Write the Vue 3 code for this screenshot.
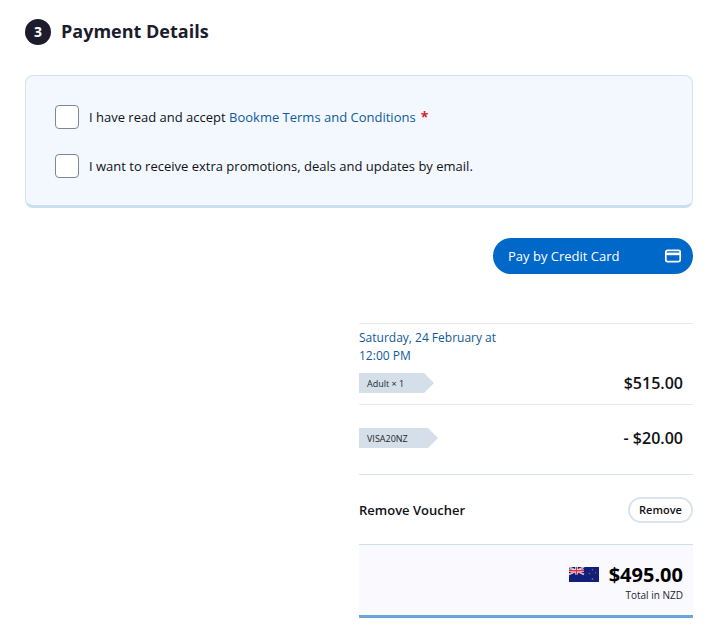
<script setup>
const consents = [
  { id: "terms", required: true },
  { id: "promo", required: false },
];
</script>

<template>
  <div class="page">
    <h2 class="heading">
      <span class="step">3</span>
      <span class="title">Payment Details</span>
    </h2>

    <div class="card">
      <label v-for="item in consents" :key="item.id" class="consent">
        <span class="box"></span>
        <span v-if="item.required">
          I have read and accept <a class="link">Bookme Terms and Conditions</a>
          <span class="star">*</span>
        </span>
        <span v-else>I want to receive extra promotions, deals and updates by email.</span>
      </label>
    </div>

    <div class="actions">
      <button class="pay">
        <span>Pay by Credit Card</span>
        <svg width="18" height="14" viewBox="0 0 18 14" fill="none">
          <rect x="1.8" y="1.4" width="14.4" height="11.2" rx="1.6" stroke="#fff" stroke-width="1.7" />
          <rect x="1.8" y="3.6" width="14.4" height="2.6" fill="#fff" />
        </svg>
      </button>
    </div>

    <div class="summary">
      <div class="row first">
        <div class="date">Saturday, 24 February at<br />12:00 PM</div>
        <div class="line">
          <span class="tag adult">Adult × 1</span>
          <span class="price">$515.00</span>
        </div>
      </div>
      <div class="row voucher">
        <div class="line">
          <span class="tag code">VISA20NZ</span>
          <span class="price">- $20.00</span>
        </div>
      </div>
      <div class="row remove">
        <span class="remove-label">Remove Voucher</span>
        <button class="remove-btn">Remove</button>
      </div>
      <div class="total">
        <div class="amount">
          <svg class="flag" width="30" height="15" viewBox="0 0 30 15">
            <rect width="30" height="15" fill="#0f1f7a" />
            <path d="M0 0L15 7.5M15 0L0 7.5" stroke="#fff" stroke-width="1.6" />
            <path d="M0 0L15 7.5M15 0L0 7.5" stroke="#d8324a" stroke-width="0.6" />
            <path d="M7.5 0V7.5M0 3.75H15" stroke="#fff" stroke-width="2.6" />
            <path d="M7.5 0V7.5M0 3.75H15" stroke="#d8324a" stroke-width="1.4" />
            <g fill="#b8475f">
              <circle cx="23.5" cy="2.8" r="0.8" />
              <circle cx="20.5" cy="6.5" r="0.8" />
              <circle cx="26.5" cy="5.8" r="0.7" />
              <circle cx="23.5" cy="12" r="0.9" />
            </g>
          </svg>
          <span>$495.00</span>
        </div>
        <div class="note">Total in NZD</div>
      </div>
    </div>
  </div>
</template>

<style>
body {
  background: #fff;
}
</style>

<style scoped>
.page {
  box-sizing: border-box;
  width: 712px;
  height: 638px;
  padding: 19px 19px 0 25px;
  overflow: hidden;
  font-family: "Open Sans", "Noto Sans", sans-serif;
  color: #111116;
}

.heading {
  display: flex;
  align-items: center;
  gap: 10px;
  height: 26px;
  margin: 0;
  font-size: 18px;
  line-height: 24px;
  font-weight: 700;
  color: #1c1c2c;
}

.title {
  margin-bottom: 2px;
}

.step {
  display: flex;
  align-items: center;
  justify-content: center;
  width: 26px;
  height: 26px;
  border-radius: 50%;
  background: #1c1c2c;
  color: #fff;
  font-size: 14px;
}

.card {
  box-sizing: border-box;
  display: flex;
  flex-direction: column;
  gap: 25px;
  height: 133px;
  margin-top: 30px;
  padding: 29px 29px 0;
  background: #f3f8fe;
  border: 1px solid #d3e2f1;
  border-bottom: 3px solid #c9dff0;
  border-radius: 8px;
}

.consent {
  display: flex;
  align-items: center;
  gap: 10px;
  height: 24px;
  font-size: 13px;
  line-height: 18px;
}

.box {
  box-sizing: border-box;
  width: 24px;
  height: 24px;
  background: #fff;
  border: 1px solid #7d8794;
  border-radius: 4px;
}

.link {
  color: #0f5a9c;
}

.star {
  margin-left: 5px;
  color: #d6232c;
  font-weight: 700;
  font-size: 14px;
  line-height: 1;
}

.actions {
  display: flex;
  justify-content: flex-end;
  margin-top: 30px;
}

.pay {
  display: flex;
  align-items: center;
  justify-content: space-between;
  box-sizing: border-box;
  width: 200px;
  height: 36px;
  padding: 0 11px 0 15px;
  border: none;
  border-radius: 18px;
  background: #0068c9;
  color: #fff;
  font-family: inherit;
  font-size: 13px;
  font-weight: 500;
}

.summary {
  width: 334px;
  margin-top: 49px;
  margin-left: auto;
}

.row {
  box-sizing: border-box;
  border-top: 1px solid #e6eaef;
}

.first {
  height: 81px;
  padding-top: 5px;
}

.date {
  font-size: 12px;
  line-height: 18px;
  color: #0f5a9c;
}

.line {
  display: flex;
  align-items: center;
  justify-content: space-between;
  padding-right: 10px;
}

.first .line {
  margin-top: 7px;
}

.voucher {
  height: 70px;
  padding-top: 22px;
}

.tag {
  display: flex;
  align-items: center;
  box-sizing: border-box;
  height: 20px;
  padding-left: 8px;
  background: #d5dfe9;
  font-size: 9px;
  color: #24262c;
  clip-path: polygon(0 0, calc(100% - 10px) 0, 100% 50%, calc(100% - 10px) 100%, 0 100%);
}

.adult {
  width: 75px;
}

.code {
  width: 79px;
}

.price {
  font-size: 16px;
  font-weight: 600;
  color: #111116;
}

.remove {
  display: flex;
  align-items: center;
  justify-content: space-between;
  height: 70px;
  border-top-color: #d9e3ec;
}

.remove-label {
  font-size: 13px;
  font-weight: 600;
}

.remove-btn {
  box-sizing: border-box;
  width: 65px;
  height: 26px;
  padding: 0;
  background: #fff;
  border: 2px solid #dbe3ec;
  border-radius: 13px;
  font-family: inherit;
  font-size: 11px;
  font-weight: 600;
  color: #111116;
}

.total {
  box-sizing: border-box;
  height: 74px;
  padding: 18px 10px 0 0;
  background: #f9f9fe;
  border-top: 1px solid #cfdeec;
  border-bottom: 3px solid #6ba6d9;
  text-align: right;
}

.amount {
  display: flex;
  align-items: center;
  justify-content: flex-end;
  gap: 10px;
  height: 22px;
  font-size: 20px;
  font-weight: 700;
  color: #000;
}

.flag {
  margin-top: 1px;
}

.note {
  margin-top: 3px;
  font-size: 10px;
  color: #24262c;
}
</style>
